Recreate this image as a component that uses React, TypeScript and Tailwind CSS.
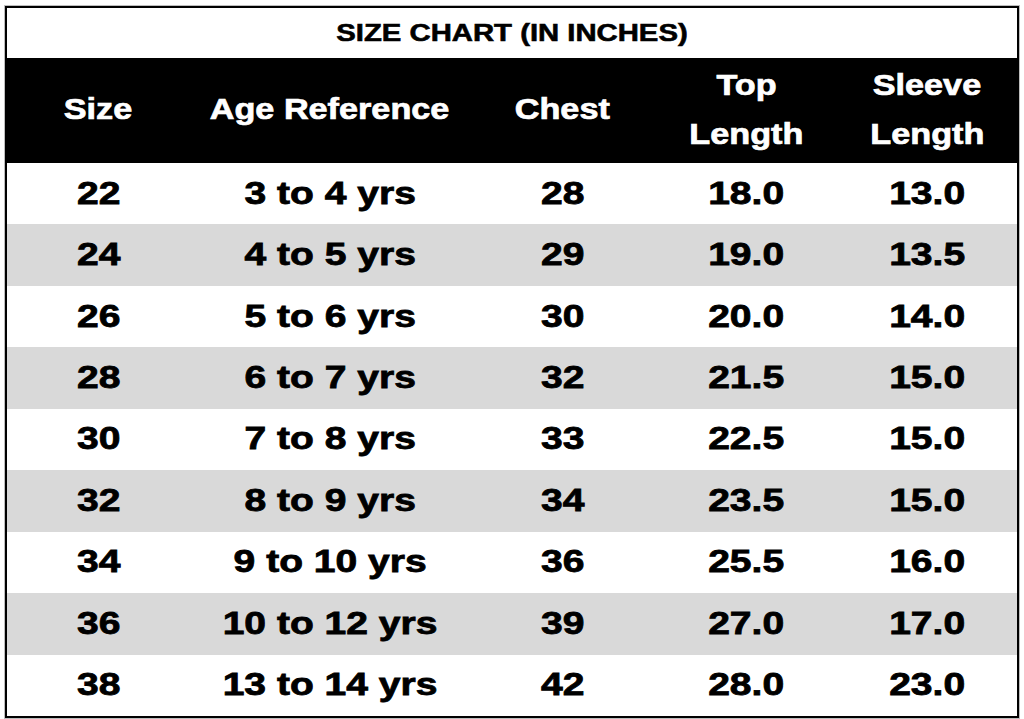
const headers: { lines: string[] }[] = [
  { lines: ["Size"] },
  { lines: ["Age Reference"] },
  { lines: ["Chest"] },
  { lines: ["Top", "Length"] },
  { lines: ["Sleeve", "Length"] },
];

const rows: string[][] = [
  ["22", "3 to 4 yrs", "28", "18.0", "13.0"],
  ["24", "4 to 5 yrs", "29", "19.0", "13.5"],
  ["26", "5 to 6 yrs", "30", "20.0", "14.0"],
  ["28", "6 to 7 yrs", "32", "21.5", "15.0"],
  ["30", "7 to 8 yrs", "33", "22.5", "15.0"],
  ["32", "8 to 9 yrs", "34", "23.5", "15.0"],
  ["34", "9 to 10 yrs", "36", "25.5", "16.0"],
  ["36", "10 to 12 yrs", "39", "27.0", "17.0"],
  ["38", "13 to 14 yrs", "42", "28.0", "23.0"],
];

const cols = "grid grid-cols-[183px_280px_185px_182px_180px]";

export default function App() {
  return (
    <div className="min-h-[719px] bg-white pl-[5px] pt-[6px] font-['Liberation_Sans',Arial,sans-serif] font-bold">
      <div className="flex h-[712px] w-[1014px] flex-col border-2 border-black bg-white shadow-[0_0_0_1px_#bdbdbd]">
        <div className="flex h-[50px] items-center justify-center text-[24px] leading-none text-black">
          <span className="inline-block scale-x-[1.22] pb-[1px] [-webkit-text-stroke:0.6px_currentColor]">
            SIZE CHART (IN INCHES)
          </span>
        </div>

        <div className={`${cols} h-[105px] bg-black text-white`}>
          {headers.map((h) => (
            <div key={h.lines.join(" ")} className="flex flex-col items-center justify-center pb-[2px] text-[29px] leading-[49px]">
              {h.lines.map((l) => (
                <span key={l} className="inline-block scale-x-[1.18] [-webkit-text-stroke:0.7px_currentColor]">
                  {l}
                </span>
              ))}
            </div>
          ))}
        </div>

        <div className="flex flex-1 flex-col">
          {rows.map((r, i) => (
            <div key={r[0]} className={`${cols} flex-1 ${i % 2 === 1 ? "bg-[#d9d9d9]" : "bg-white"}`}>
              {r.map((c, j) => (
                <div key={j} className="flex items-center justify-center pb-[2px] text-[32px] leading-none text-black">
                  <span className="inline-block scale-x-[1.22] [-webkit-text-stroke:0.8px_currentColor]">{c}</span>
                </div>
              ))}
            </div>
          ))}
        </div>
      </div>
    </div>
  );
}
